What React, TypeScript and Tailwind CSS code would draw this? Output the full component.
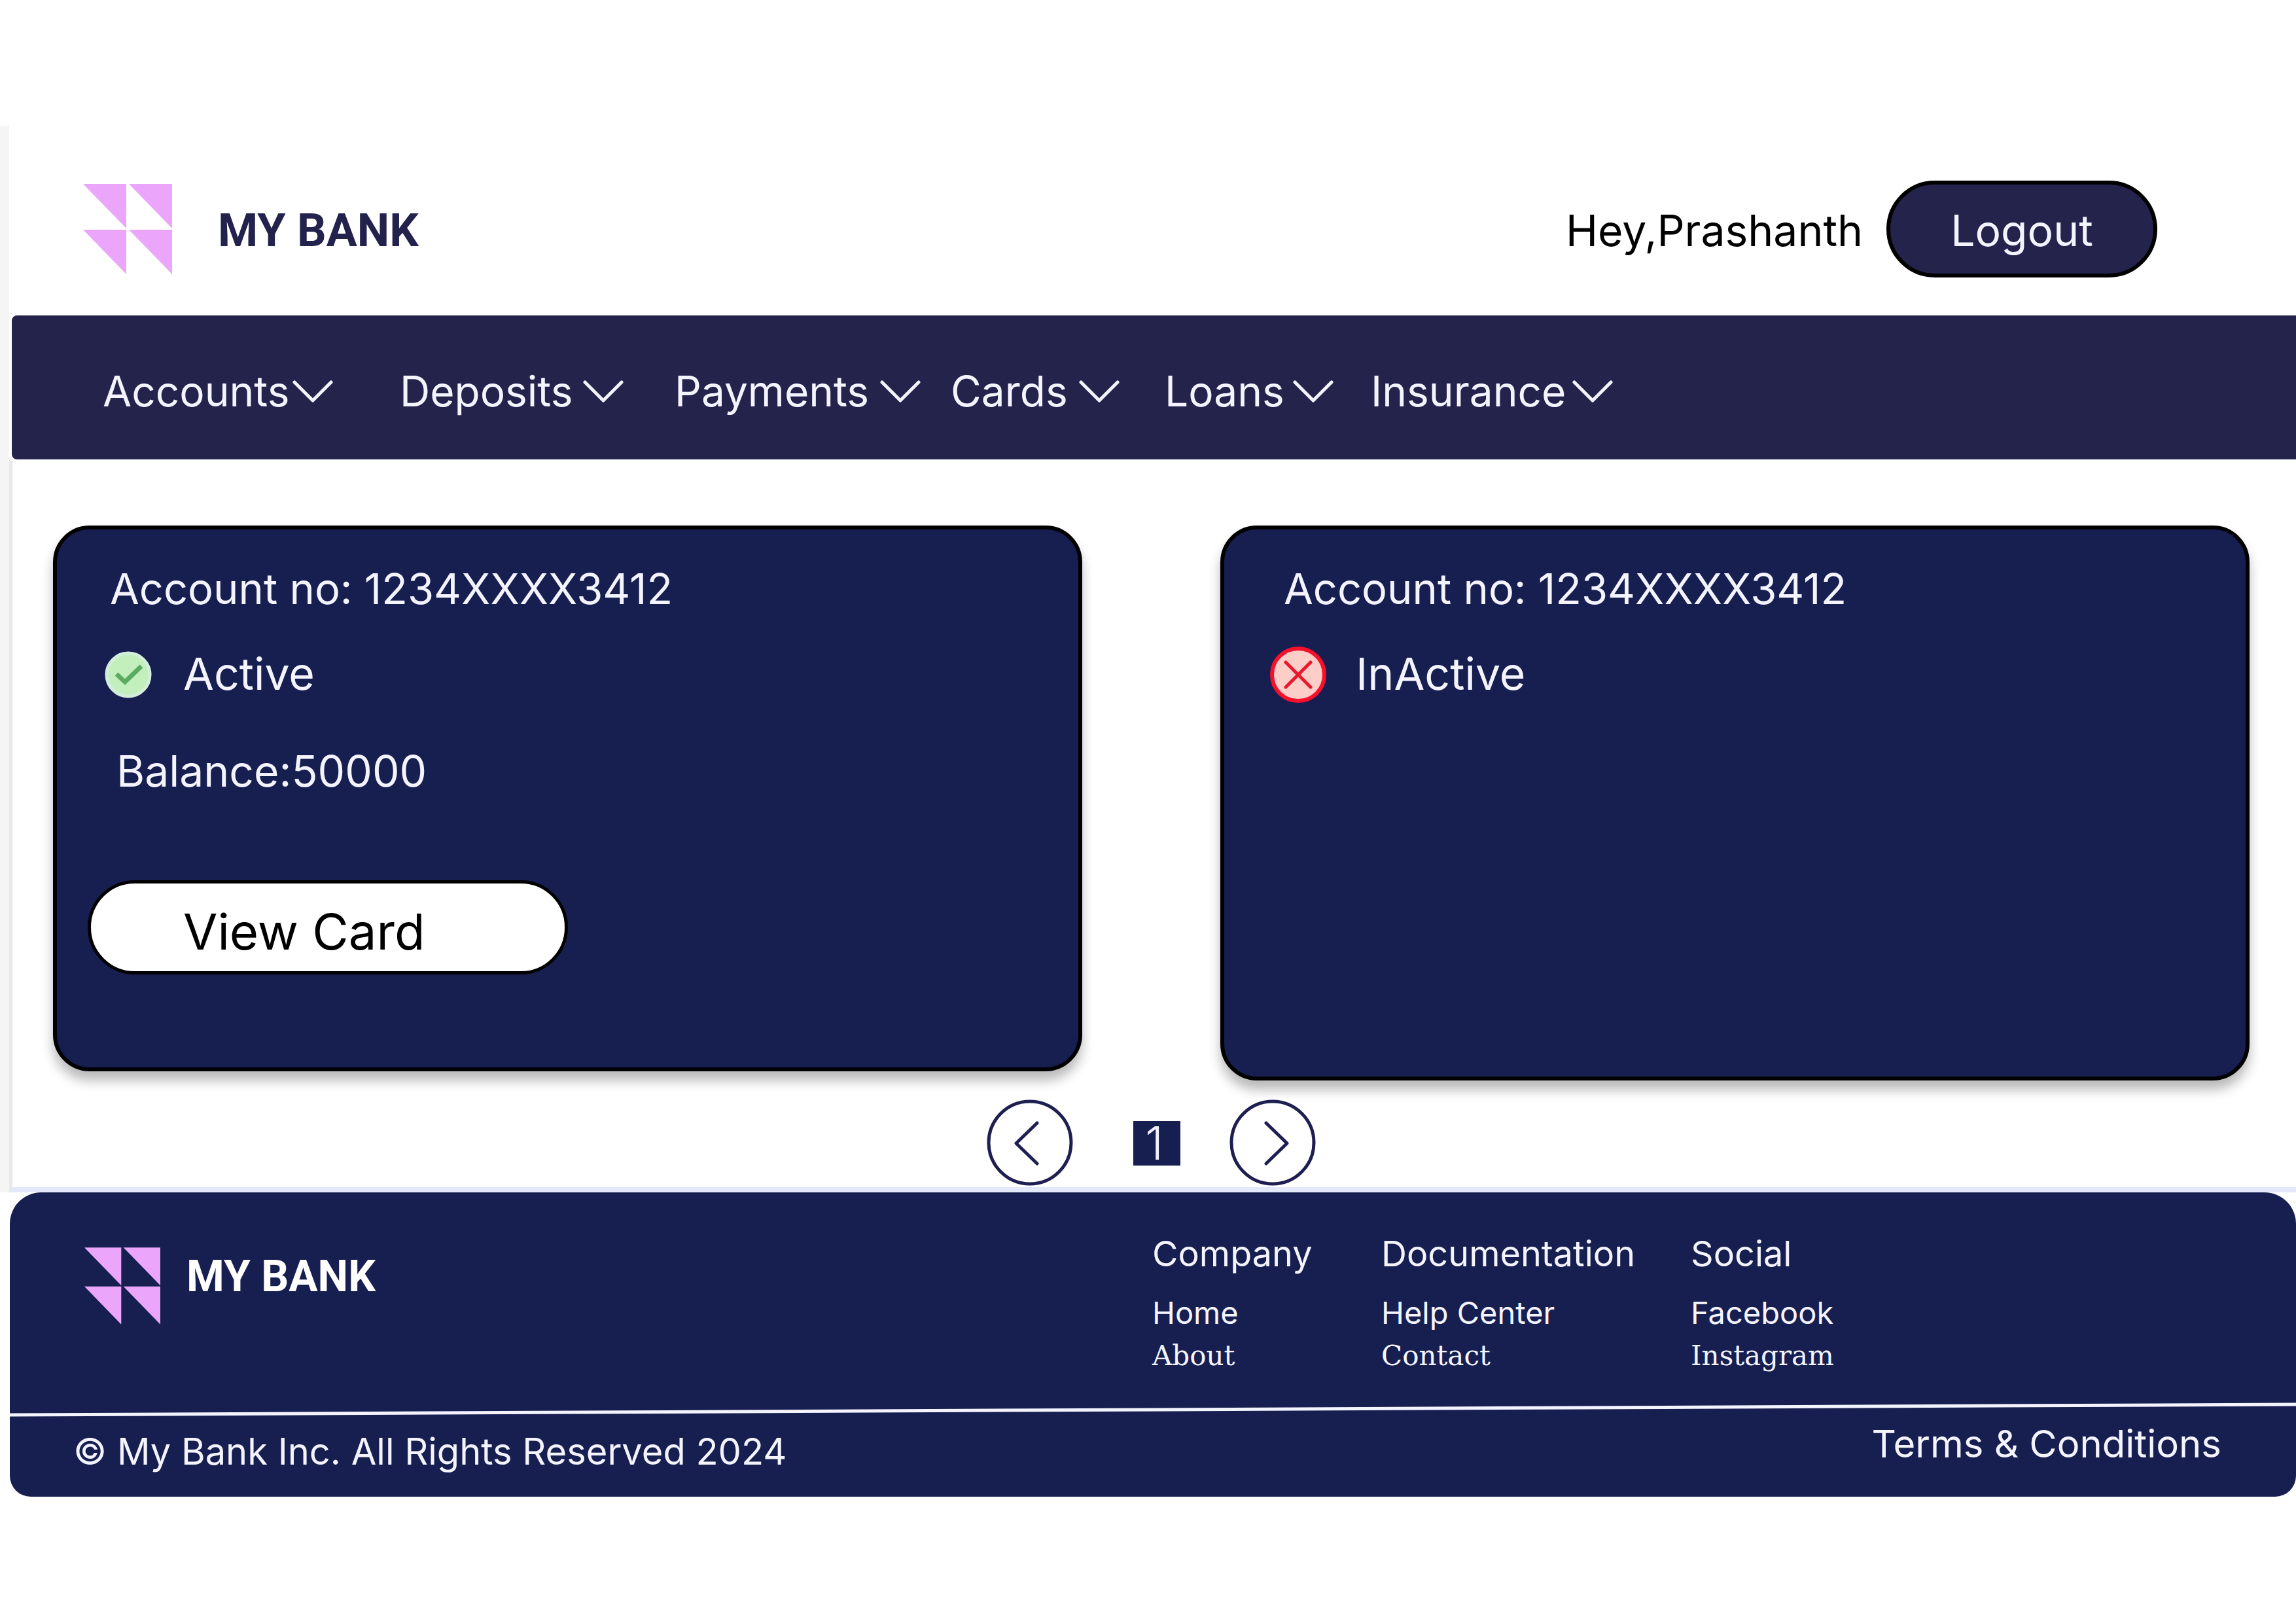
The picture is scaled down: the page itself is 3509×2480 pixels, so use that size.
import React from "react";

const INTER = "font-[Inter,sans-serif]";

function Logo({ className }: { className: string }) {
  return (
    <svg viewBox="0 0 136 138" className={className} aria-hidden="true">
      <g fill="#eba6fb">
        <path d="M0 0H66V68Z" />
        <path d="M70 0H136V68Z" />
        <path d="M0 70H66V138Z" />
        <path d="M70 70H136V138Z" />
      </g>
    </svg>
  );
}

function ChevronDown() {
  return (
    <svg viewBox="0 0 62 34" className="h-[34px] w-[62px] shrink-0" fill="none" stroke="#f4f4ff" strokeWidth="5" strokeLinecap="round" strokeLinejoin="round" aria-hidden="true">
      <path d="M3 3L31 31L59 3" />
    </svg>
  );
}

const navItems = [
  { label: "Accounts", className: "w-[352px]" },
  { label: "Deposits", className: "ml-[102px] w-[342px]" },
  { label: "Payments", className: "ml-[78px] w-[376px]" },
  { label: "Cards", className: "ml-[46px] w-[258px]" },
  { label: "Loans", className: "ml-[69px] w-[258px]" },
  { label: "Insurance", className: "ml-[57px] w-[370px]" },
];

const footerColumns = [
  { title: "Company", links: ["Home", "About"], className: "w-[350px]" },
  { title: "Documentation", links: ["Help Center", "Contact"], className: "w-[473px]" },
  { title: "Social", links: ["Facebook", "Instagram"], className: "" },
];

function ActiveIcon() {
  return (
    <svg viewBox="0 0 72 72" className="size-[72px] shrink-0" aria-hidden="true">
      <circle cx="36" cy="36" r="33" fill="#c3efbd" stroke="#d3efdc" strokeWidth="5" />
      <path d="M18 35L31 47L56 23" fill="none" stroke="#5bab60" strokeWidth="7" />
    </svg>
  );
}

function InactiveIcon() {
  return (
    <svg viewBox="0 0 88 88" className="size-[88px] shrink-0" aria-hidden="true">
      <circle cx="44" cy="44" r="40" fill="#fdcdc8" stroke="#f5102b" strokeWidth="6" />
      <path d="M25 25L63 63M63 25L25 63" fill="none" stroke="#e8192c" strokeWidth="5" strokeLinecap="round" />
    </svg>
  );
}

function PageArrow({ d, label }: { d: string; label: string }) {
  return (
    <button type="button" aria-label={label} className="size-[133px]">
      <svg viewBox="0 0 133 133" fill="none" stroke="#1e1f50" strokeWidth="5" strokeLinecap="round" strokeLinejoin="round" aria-hidden="true">
        <circle cx="66" cy="66" r="63" />
        <path d={d} />
      </svg>
    </button>
  );
}

const cardBase =
  "rounded-[56px] border-[6px] border-black bg-[#171f50] pl-[47px] pt-[51px] text-[65px] leading-[80px] text-[#f4f4ff] shadow-[0_14px_18px_rgba(0,0,0,0.28)]";

export default function App() {
  return (
    <div className={`${INTER} bg-white pt-[192px]`}>
      <div className="border-l-[14px] border-[#f5f5f5]">
        <header className="flex items-center justify-between pt-[84px] pr-[212px] pb-[58px] pl-[113px]">
          <div className="flex items-center gap-[70px]">
            <Logo className="h-[138px] w-[136px]" />
            <span className="pt-1 font-[Roboto,sans-serif] text-[70px] leading-[80px] font-bold text-[#23224c]">MY BANK</span>
          </div>
          <div className="flex items-center gap-[36px]">
            <span className="pt-1 text-[66px] leading-[80px] text-black">Hey,Prashanth</span>
            <button type="button" className="h-[148px] w-[414px] rounded-[74px] border-[6px] border-black bg-[#24234c] pt-1 text-[66px] leading-[80px] text-[#f4f4ff]">
              Logout
            </button>
          </div>
        </header>

        <nav className="ml-1 flex h-[220px] items-center rounded-l-lg bg-[#24234c] pt-3 pl-[139px] text-[64px] leading-[80px] text-[#f4f4ff]">
          {navItems.map((item) => (
            <button key={item.label} type="button" className={`flex items-center justify-between ${item.className}`}>
              {item.label}
              <ChevronDown />
            </button>
          ))}
        </nav>

        <main className="border-b-8 border-l-[5px] border-b-[#e3e8fa] border-l-[#e9e9e9] pt-[101px] pb-px">
          <div className="grid grid-cols-2 items-start gap-[211px] pr-[71px] pl-[62px]">
            <section className={`${cardBase} min-h-[834px]`}>
              <p className="pl-[34px]">Account no: 1234XXXX3412</p>
              <div className="mt-[47px] flex h-[88px] items-center gap-12 pl-[26px] text-[68px]">
                <ActiveIcon />
                <span className="pb-1">Active</span>
              </div>
              <p className="mt-[63px] pl-[44px] text-[66px]">Balance:50000</p>
              <button type="button" className="mt-[127px] h-[144px] w-[734px] rounded-[72px] border-[5px] border-black bg-white pt-3 pl-[141px] text-left text-[76px] leading-[80px] text-black">
                View Card
              </button>
            </section>
            <section className={`${cardBase} min-h-[848px]`}>
              <p className="pl-[44px]">Account no: 1234XXXX3412</p>
              <div className="mt-[47px] flex h-[88px] items-center gap-11 pl-[22px] text-[68px]">
                <InactiveIcon />
                <span className="pb-1">InActive</span>
              </div>
            </section>
          </div>

          <div className="mt-[29px] flex items-center justify-center pr-2">
            <PageArrow label="Previous page" d="M77 36L45 67L77 98" />
            <button type="button" aria-current="page" className="mr-[75px] ml-[91px] h-[68px] w-[72px] bg-[#171f50] pr-2 text-[70px] leading-[68px] font-light text-[#f0f0ff]">
              1
            </button>
            <PageArrow label="Next page" d="M56 36L88 67L56 98" />
          </div>
        </main>
      </div>

      <footer className="ml-[15px] rounded-t-[48px] rounded-b-[32px] bg-[#171f50] text-[#f4f4ff]">
        <div className="flex h-[320px] items-start pl-[114px]">
          <div className="mt-[84px] flex flex-1 items-center gap-10">
            <Logo className="h-[118px] w-[116px]" />
            <span className="pb-7 font-[Roboto,sans-serif] text-[66px] leading-[80px] font-bold text-white">MY BANK</span>
          </div>
          <div className="flex w-[1748px] pt-[62px]">
            {footerColumns.map((col) => (
              <div key={col.title} className={`flex flex-col items-start ${col.className}`}>
                <h2 className="text-[54px] leading-[64px]">{col.title}</h2>
                <a href="#" className="mt-[26px] text-[47px] leading-[64px]">{col.links[0]}</a>
                <a href="#" className="font-['DejaVu_Serif',serif] text-[42px] leading-[68px]">{col.links[1]}</a>
              </div>
            ))}
          </div>
        </div>
        <svg viewBox="0 0 3494 24" preserveAspectRatio="none" className="block h-6 w-full" aria-hidden="true">
          <path d="M0 20L3494 4" stroke="#f4f4ff" strokeWidth="5" />
        </svg>
        <div className="flex h-[121px] items-start justify-between pr-[114px] pl-[97px] leading-[80px]">
          <span className="pt-3 text-[56px]">© My Bank Inc. All Rights Reserved 2024</span>
          <a href="#" className="text-[58px]">Terms &amp; Conditions</a>
        </div>
      </footer>
    </div>
  );
}
